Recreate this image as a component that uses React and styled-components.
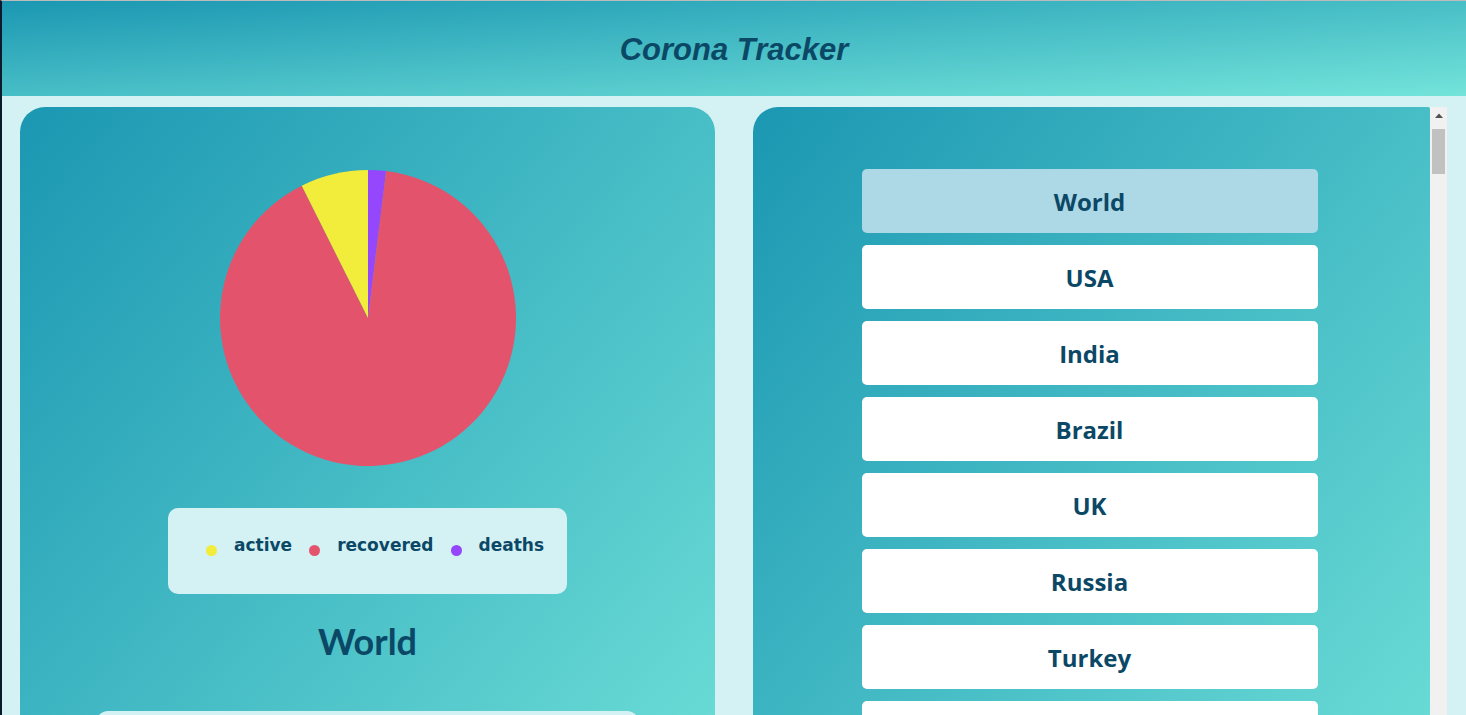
import React from "react";
import styled, { createGlobalStyle } from "styled-components";

const GlobalStyle = createGlobalStyle`
  html, body {
    margin: 0;
    padding: 0;
    overflow: hidden;
  }
  body {
    background-color: #d4f1f4;
    font-family: "Open Sans", "Liberation Sans", sans-serif;
  }
`;

const ink = "#0b4866";

const StyledPage = styled.div`
  min-height: 100vh;
  border-left: 2px solid #0b1a2c;
  border-top: 1px solid #bcbcbc;
  background-color: #d4f1f4;
  box-sizing: border-box;
`;

const StyledHeader = styled.header`
  height: 95px;
  box-sizing: border-box;
  padding-top: 3px;
  display: flex;
  align-items: center;
  justify-content: center;
  background: linear-gradient(to bottom right, #1b97b2, #74e4da);
`;

const StyledTitle = styled.h1`
  margin: 0;
  font-family: "Liberation Sans", Arial, sans-serif;
  font-style: italic;
  font-weight: 700;
  font-size: 31px;
  color: ${ink};
`;

const StyledMain = styled.main`
  display: grid;
  grid-template-columns: 695px 694px;
  column-gap: 38px;
  padding: 11px 19px 0 18px;
`;

const StyledCard = styled.section`
  height: 820px;
  border-radius: 25px 25px 0 0;
  background: linear-gradient(to bottom right, #1b97b2, #74e4da);
  display: flex;
  flex-direction: column;
  align-items: center;
  padding-top: 63px;
  box-sizing: border-box;
`;

const StyledPanel = styled.section`
  height: 820px;
  display: flex;
`;

const StyledScroller = styled.div`
  flex: 1;
  overflow: hidden;
  border-radius: 25px 2px 0 0;
  background: linear-gradient(to bottom right, #1b97b2, #74e4da);
  box-sizing: border-box;
  padding: 62px 4px 0 0;
`;

const StyledScrollbar = styled.div`
  width: 17px;
  flex-shrink: 0;
  background-color: #f1f1f1;
  display: flex;
  flex-direction: column;
  align-items: center;
`;

const StyledArrow = styled.div`
  height: 17px;
  width: 17px;
  display: flex;
  align-items: center;
  justify-content: center;
`;

const StyledThumb = styled.div`
  width: 13px;
  height: 45px;
  margin-top: 5px;
  background-color: #c1c1c1;
`;

const StyledList = styled.div`
  display: flex;
  flex-direction: column;
  align-items: center;
  gap: 12px;
  padding-bottom: 40px;
`;

const StyledCountry = styled.button`
  width: 456px;
  height: 64px;
  flex-shrink: 0;
  border: none;
  border-radius: 5px;
  background-color: ${(p) => (p.$active ? "#add8e6" : "#ffffff")};
  color: ${ink};
  font-family: "Open Sans", "Liberation Sans", sans-serif;
  font-weight: 700;
  font-size: 24px;
  cursor: pointer;
`;

const StyledLegend = styled.div`
  width: 399px;
  height: 86px;
  margin-top: 42px;
  box-sizing: border-box;
  padding: 24px 20px 0 38px;
  display: flex;
  gap: 17px;
  border-radius: 10px;
  background-color: #d4f1f4;
`;

const StyledLegendItem = styled.div`
  display: flex;
  align-items: center;
  gap: 17px;
  font-family: "Comic Sans MS", "DejaVu Sans", sans-serif;
  font-weight: 700;
  font-size: 17px;
  color: ${ink};
  height: 26px;
`;

const StyledDot = styled.span`
  width: 11px;
  height: 11px;
  margin-top: 10px;
  border-radius: 50%;
  background-color: ${(p) => p.$color};
`;

const StyledPlace = styled.h2`
  margin: 26px 0 0 0;
  font-family: Lato, "Open Sans", sans-serif;
  font-weight: 700;
  font-size: 36px;
  line-height: 43px;
  color: ${ink};
`;

const StyledStats = styled.div`
  width: 543px;
  margin-top: 48px;
  border-radius: 12px;
  background-color: #d4f1f4;
  padding: 20px 30px;
  box-sizing: border-box;
  font-family: Lato, "Open Sans", sans-serif;
  font-size: 20px;
  color: ${ink};
  display: flex;
  flex-direction: column;
  gap: 10px;
`;

const slices = [
  { label: "deaths", value: 3820000, color: "#9447fc" },
  { label: "recovered", value: 177700000, color: "#e3546c" },
  { label: "active", value: 14480000, color: "#f2ec3a" },
];

const legendOrder = ["active", "recovered", "deaths"];

const countries = [
  "World", "USA", "India", "Brazil", "UK", "Russia", "Turkey", "France", "Iran",
  "Argentina", "Spain", "Colombia", "Italy", "Germany", "Indonesia", "Mexico",
  "Poland", "South Africa", "Philippines", "Ukraine", "Malaysia", "Peru",
];

function PieChart({ data, size }) {
  const r = size / 2;
  const total = data.reduce((s, d) => s + d.value, 0);
  let start = 0;
  const point = (a) => [r + r * Math.sin(a), r - r * Math.cos(a)];
  return (
    <svg width={size} height={size} viewBox={`0 0 ${size} ${size}`}>
      {data.map((d) => {
        const sweep = (d.value / total) * Math.PI * 2;
        const [x1, y1] = point(start);
        const [x2, y2] = point(start + sweep);
        const large = sweep > Math.PI ? 1 : 0;
        const path = `M ${r} ${r} L ${x1} ${y1} A ${r} ${r} 0 ${large} 1 ${x2} ${y2} Z`;
        start += sweep;
        return <path key={d.label} d={path} fill={d.color} />;
      })}
    </svg>
  );
}

function App() {
  const byLabel = Object.fromEntries(slices.map((s) => [s.label, s]));
  return (
    <>
      <GlobalStyle />
      <StyledPage>
        <StyledHeader>
          <StyledTitle>Corona Tracker</StyledTitle>
        </StyledHeader>
        <StyledMain>
          <StyledCard>
            <PieChart data={slices} size={296} />
            <StyledLegend>
              {legendOrder.map((label) => (
                <StyledLegendItem key={label}>
                  <StyledDot $color={byLabel[label].color} />
                  {label}
                </StyledLegendItem>
              ))}
            </StyledLegend>
            <StyledPlace>World</StyledPlace>
            <StyledStats>
              <div>Active: 14,480,000</div>
              <div>Recovered: 177,700,000</div>
              <div>Deaths: 3,820,000</div>
            </StyledStats>
          </StyledCard>
          <StyledPanel>
            <StyledScroller>
              <StyledList>
                {countries.map((name, i) => (
                  <StyledCountry key={name} $active={i === 0}>
                    {name}
                  </StyledCountry>
                ))}
              </StyledList>
            </StyledScroller>
            <StyledScrollbar>
              <StyledArrow>
                <svg width="8" height="5" viewBox="0 0 8 5">
                  <polygon points="0,5 4,0.5 8,5" fill="#505050" />
                </svg>
              </StyledArrow>
              <StyledThumb />
            </StyledScrollbar>
          </StyledPanel>
        </StyledMain>
      </StyledPage>
    </>
  );
}

export default App;
